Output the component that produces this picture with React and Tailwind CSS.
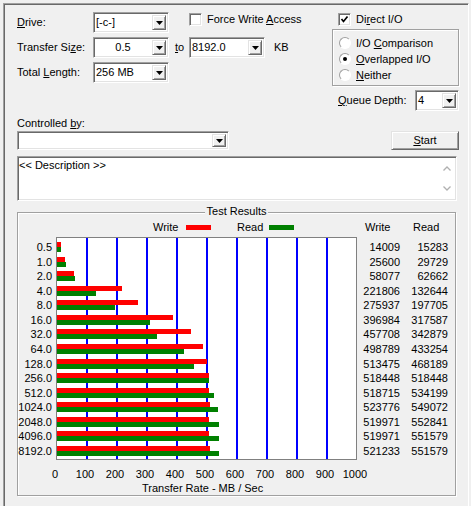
import React from 'react';

const results = [
  ['0.5', 14009, 15283],
  ['1.0', 25600, 29729],
  ['2.0', 58077, 62662],
  ['4.0', 221806, 132644],
  ['8.0', 275937, 197705],
  ['16.0', 396984, 317587],
  ['32.0', 457708, 342879],
  ['64.0', 498789, 433254],
  ['128.0', 513475, 468189],
  ['256.0', 518448, 518448],
  ['512.0', 518715, 534199],
  ['1024.0', 523776, 549072],
  ['2048.0', 519971, 552841],
  ['4096.0', 519971, 551579],
  ['8192.0', 521233, 551579],
];

const ticks = [0, 100, 200, 300, 400, 500, 600, 700, 800, 900, 1000];
const gridLines = [1, 2, 3, 4, 5, 6, 7, 8, 9];

const sunken =
  'border border-t-[#a0a0a0] border-l-[#a0a0a0] border-b-white border-r-white shadow-[inset_1px_1px_0_#696969,inset_-1px_-1px_0_#e3e3e3]';
const raised =
  'border border-t-[#e3e3e3] border-l-[#e3e3e3] border-b-[#696969] border-r-[#696969] shadow-[inset_1px_1px_0_#ffffff,inset_-1px_-1px_0_#a0a0a0]';
const etched = 'border border-[#a0a0a0] shadow-[inset_1px_1px_0_#ffffff,1px_1px_0_#ffffff]';

function DropArrow() {
  return (
    <svg width="7" height="4" viewBox="0 0 7 4">
      <path d="M0 0h7L3.5 4z" fill="#000" />
    </svg>
  );
}

function Combo({ className, value = '', center = false, small = false }) {
  return (
    <div className={`flex items-center bg-white ${sunken} ${className}`}>
      <span className={`flex-1 leading-[13px] ${center ? 'text-center' : 'pl-[2px]'}`}>{value}</span>
      <div
        className={`mr-[2px] w-[14px] ${small ? 'h-[13px]' : 'h-[15px]'} flex items-center justify-center bg-[#f0f0f0] ${raised}`}
      >
        <DropArrow />
      </div>
    </div>
  );
}

function CheckBox({ checked }) {
  return (
    <div className={`w-[13px] h-[13px] bg-white flex items-center justify-center ${sunken}`}>
      {checked && (
        <svg width="9" height="9" viewBox="0 0 9 9">
          <polyline points="1.5,4 3.5,6.5 7.5,1.5" fill="none" stroke="#000" strokeWidth="1.7" />
        </svg>
      )}
    </div>
  );
}

function Radio({ selected }) {
  return (
    <div className="w-[12px] h-[12px] rounded-full bg-white border border-t-[#a0a0a0] border-l-[#a0a0a0] border-b-white border-r-white flex items-center justify-center">
      {selected && <div className="w-[4px] h-[4px] rounded-full bg-black" />}
    </div>
  );
}

export default function App() {
  return (
    <div className="w-[471px] h-[506px] bg-[#f0f0f0] pt-[3px] pl-[3px] overflow-hidden font-['Liberation_Sans',Arial,sans-serif] text-[11px] text-black">
      <div className="w-[466px] h-[503px] border-t border-l border-r border-t-[#a0a0a0] border-l-[#a0a0a0] border-r-white shadow-[inset_1px_1px_0_#696969]">
        {/* top settings */}
        <div className="flex mt-[8px] pl-[13px] pr-[9px]">
          <div className="flex flex-col gap-[4px]">
            <div className="h-[21px] flex items-center">
              <span className="w-[76px]">
                <u>D</u>rive:
              </span>
              <Combo className="w-[76px] h-[21px]" value="[-c-]" />
              <div className="self-start mt-[1px] ml-[20px] h-[13px] flex items-center gap-[5px]">
                <CheckBox />
                <span>
                  Force Write <u>A</u>ccess
                </span>
              </div>
            </div>
            <div className="h-[21px] flex items-center">
              <span className="w-[76px]">
                Transfer Si<u>z</u>e:
              </span>
              <Combo className="w-[76px] h-[21px]" value="0.5" center />
              <span className="w-[14px] ml-[6px]">
                <u>t</u>o
              </span>
              <Combo className="w-[76px] h-[21px]" value="8192.0" />
              <span className="ml-[9px]">KB</span>
            </div>
            <div className="h-[21px] flex items-center">
              <span className="w-[76px]">
                Total <u>L</u>ength:
              </span>
              <Combo className="w-[76px] h-[21px]" value="256 MB" />
            </div>
          </div>

          <div className="ml-auto w-[127px] flex flex-col">
            <div className="h-[15px] flex items-center pl-[6px] gap-[5px]">
              <CheckBox checked />
              <span>
                Di<u>r</u>ect I/O
              </span>
            </div>
            <div className={`mt-[2px] h-[57px] pt-[5px] pl-[6px] ${etched}`}>
              <div className="h-[16px] flex items-center gap-[5px]">
                <Radio />
                <span>
                  I/O <u>C</u>omparison
                </span>
              </div>
              <div className="h-[16px] flex items-center gap-[5px]">
                <Radio selected />
                <span>
                  <u>O</u>verlapped I/O
                </span>
              </div>
              <div className="h-[16px] flex items-center gap-[5px]">
                <Radio />
                <span>
                  <u>N</u>either
                </span>
              </div>
            </div>
            <div className="mt-[4px] h-[21px] flex items-center pl-[6px]">
              <span className="w-[77px]">
                <u>Q</u>ueue Depth:
              </span>
              <Combo className="w-[44px] h-[21px]" value="4" />
            </div>
          </div>
        </div>

        {/* controlled by + start */}
        <div className="flex items-end mt-[6px] pl-[13px] pr-[9px]">
          <div className="flex flex-col">
            <span className="h-[13px] leading-[13px]">
              Controlled <u>b</u>y:
            </span>
            <Combo className="mt-[1px] w-[212px] h-[19px]" small />
          </div>
          <button className={`ml-auto w-[68px] h-[19px] bg-[#f0f0f0] leading-[13px] ${raised}`}>
            <u>S</u>tart
          </button>
        </div>

        {/* description */}
        <div className={`mt-[6px] ml-[13px] w-[440px] h-[45px] bg-white flex ${sunken}`}>
          <span className="flex-1 pl-[1px] pt-[2px] leading-[13px]">&lt;&lt; Description &gt;&gt;</span>
          <div className="w-[17px] mr-[1px] my-[1px] flex flex-col justify-between items-center py-[8px] bg-white">
            <svg width="8" height="5" viewBox="0 0 8 5">
              <polyline points="0.5,4.5 4,1 7.5,4.5" fill="none" stroke="#b0b0b0" strokeWidth="1.3" />
            </svg>
            <svg width="8" height="5" viewBox="0 0 8 5">
              <polyline points="0.5,0.5 4,4 7.5,0.5" fill="none" stroke="#b0b0b0" strokeWidth="1.3" />
            </svg>
          </div>
        </div>

        {/* test results */}
        <div className={`relative mt-[11px] ml-[13px] w-[439px] h-[284px] ${etched}`}>
          <span className="absolute -top-[8px] left-1/2 -translate-x-1/2 px-[2px] bg-[#f0f0f0] leading-[13px]">
            Test Results
          </span>

          <div className="mt-[8px] h-[13px] flex items-center leading-[13px]">
            <span className="w-[135px]" />
            <span className="w-[33px]">Write</span>
            <span className="w-[25px] h-[5px] bg-[#ff0000]" />
            <span className="w-[26px]" />
            <span className="w-[32px]">Read</span>
            <span className="w-[25px] h-[5px] bg-[#008000]" />
            <span className="w-[71px]" />
            <span className="w-[48px]">Write</span>
            <span>Read</span>
          </div>

          <div className="mt-[3px] flex">
            <div className="w-[34px] pt-[5px] flex flex-col gap-[4.57px] text-right">
              {results.map(([size]) => (
                <div key={size} className="h-[10px] leading-[10px] whitespace-nowrap">
                  {size}
                </div>
              ))}
            </div>

            <div className="relative ml-[4px] w-[301px] h-[223px] bg-white border border-[#808080]">
              {gridLines.map((k) => (
                <div
                  key={k}
                  className="absolute top-0 bottom-0 w-[2px] bg-[#0000ff]"
                  style={{ left: k * 30 - 1 }}
                />
              ))}
              <div className="relative pt-[4px] flex flex-col gap-[4.57px]">
                {results.map(([size, write, read]) => (
                  <div key={size} className="h-[10px] flex flex-col">
                    <div className="h-[5px] bg-[#ff0000]" style={{ width: (write / 1024) * 0.3 }} />
                    <div className="h-[5px] bg-[#008000]" style={{ width: (read / 1024) * 0.3 }} />
                  </div>
                ))}
              </div>
            </div>

            <div className="w-[43px] pt-[5px] flex flex-col gap-[4.57px] text-right">
              {results.map(([size, write]) => (
                <div key={size} className="h-[10px] leading-[10px]">
                  {write}
                </div>
              ))}
            </div>
            <div className="w-[48px] pt-[5px] flex flex-col gap-[4.57px] text-right">
              {results.map(([size, , read]) => (
                <div key={size} className="h-[10px] leading-[10px]">
                  {read}
                </div>
              ))}
            </div>
          </div>

          <div className="mt-[8px] pl-[22px] flex leading-[13px]">
            {ticks.map((t) => (
              <span key={t} className="w-[30px] text-center">
                {t}
              </span>
            ))}
          </div>
          <div className="mt-[1px] pl-[124px] leading-[13px]">Transfer Rate - MB / Sec</div>
        </div>
      </div>
    </div>
  );
}
